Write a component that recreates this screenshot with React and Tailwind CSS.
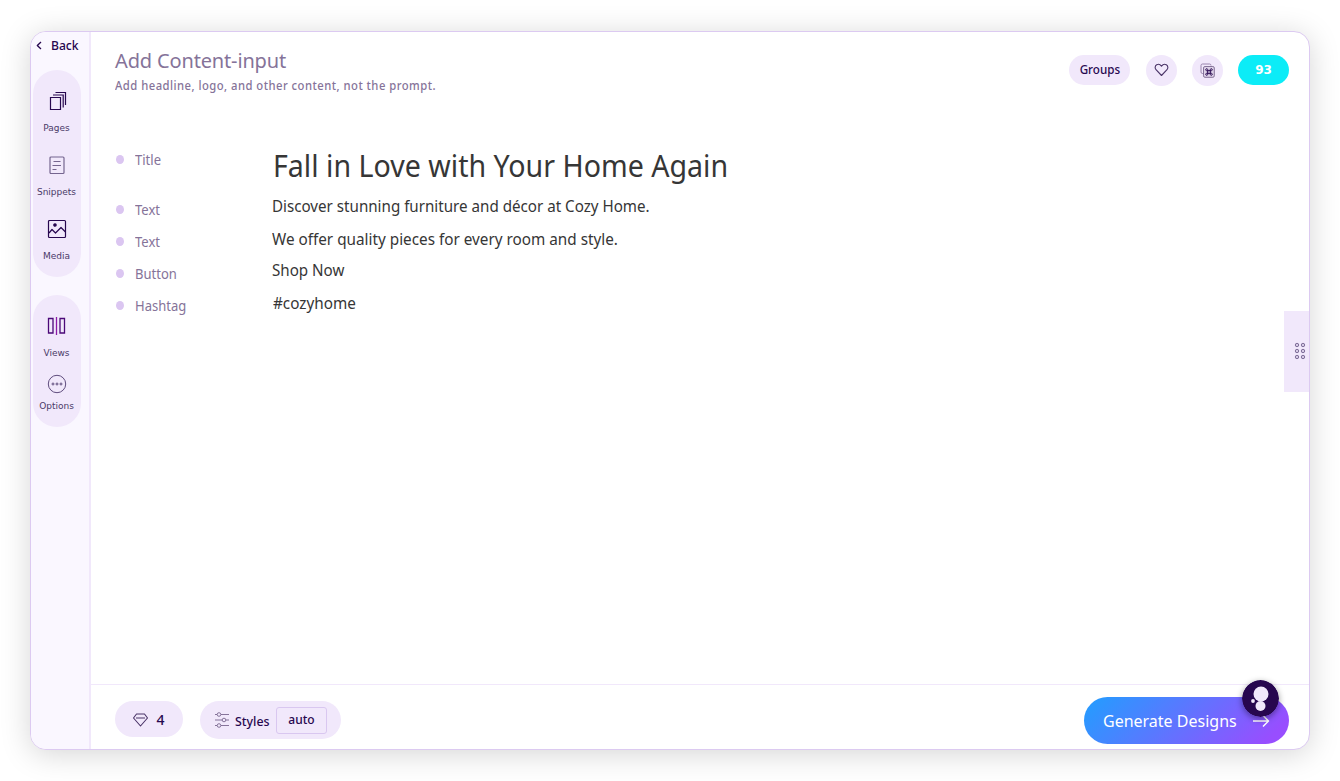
import React from "react";

const stroke = { fill: "none", stroke: "currentColor", strokeLinejoin: "round" };

function PagesIcon() {
  return (
    <svg width="18" height="20" viewBox="0 0 18 20" {...stroke} strokeLinejoin="miter" strokeWidth="1.2">
      <path d="M1.500 6.500h10v12h-10zM4 4h10.200v12.500M6.500 1.500h10v12.500" />
    </svg>
  );
}

function SnippetsIcon() {
  return (
    <svg width="16" height="19" viewBox="0 0 16 19" {...stroke} strokeWidth="1.200">
      <rect x="1" y="1" width="14" height="16.500" rx="1" />
      <path d="M4.500 5.500h7M3.500 9.500h8.500M3.500 13.500h4" />
    </svg>
  );
}

function MediaIcon() {
  return (
    <svg width="20" height="20" viewBox="0 0 20 20" {...stroke} strokeWidth="1.2">
      <rect x="1.500" y="1.500" width="17" height="17" rx="1" />
      <path d="M2 14l3-3.500 3.500 3.500 5.500-5.500 4.500 4.500" />
      <circle cx="8" cy="6" r="1.200" fill="currentColor" />
    </svg>
  );
}

function ViewsIcon() {
  return (
    <svg width="20" height="20" viewBox="0 0 20 20" {...stroke} strokeLinejoin="miter" strokeWidth="1.300">
      <path d="M1.500 2.500h4.500v14.500h-4.500zM13 2.500h4.500v14.500h-4.500z" />
      <path d="M9.500 1v18" stroke="#8d1aa8" />
    </svg>
  );
}

function OptionsIcon() {
  return (
    <svg width="20" height="20" viewBox="0 0 20 20" {...stroke} strokeWidth="1">
      <circle cx="10" cy="10" r="8.700" />
      <circle cx="6" cy="10" r="1" />
      <circle cx="10" cy="10" r="1" />
      <circle cx="14" cy="10" r="1" />
    </svg>
  );
}

function NavItem({ icon, label, className, tone }) {
  return (
    <div className={`flex flex-col items-center ${className}`}>
      <span className={`flex h-5 items-center ${tone}`}>{icon}</span>
      <span className="mt-[10px] text-[9px] leading-[14px] text-[#4a3a68]">{label}</span>
    </div>
  );
}

function Sidebar() {
  return (
    <aside className="flex w-[60px] shrink-0 flex-col border-r-2 border-[#f1e8fb] bg-[#faf7ff] font-['DejaVu_Sans',sans-serif]">
      <div className="flex h-[38px] items-start pt-[5px] pl-[5px] font-['Noto_Sans',sans-serif] text-[#27074f]">
        <svg className="mt-[4px]" width="6" height="9" viewBox="0 0 6 9" {...stroke} strokeWidth="1.300">
          <path d="M5 1L1.300 4.500L5 8" />
        </svg>
        <span className="ml-[9px] origin-left scale-x-[0.970] text-[12.500px] leading-[17px] font-medium">Back</span>
      </div>
      <div className="ml-[1.500px] flex h-[207px] w-[48px] flex-col rounded-[24px] bg-[#f1e8fb] pt-[21px]">
        <NavItem icon={<PagesIcon />} label="Pages" className="h-[64px]" tone="pl-[2px] text-[#27074f]" />
        <NavItem icon={<SnippetsIcon />} label="Snippets" className="h-[64px]" tone="text-[#75658f]" />
        <NavItem icon={<MediaIcon />} label="Media" className="" tone="text-[#27074f]" />
      </div>
      <div className="mt-[18px] ml-[1.500px] flex h-[132px] w-[48px] flex-col rounded-[24px] bg-[#f1e8fb] pt-[21px]">
        <NavItem icon={<ViewsIcon />} label="Views" className="h-[58px]" tone="text-[#4b0878]" />
        <div className="flex flex-col items-center text-[#5f4c7d]">
          <OptionsIcon />
          <span className="mt-[5px] text-[9px] leading-[14px] text-[#4a3a68]">Options</span>
        </div>
      </div>
    </aside>
  );
}

function Header() {
  return (
    <header className="flex justify-between pr-[20px] pl-[24px]">
      <div className="pt-[15px] text-[#857399]">
        <h1 className="text-[20px] leading-[28px] tracking-[-0.150px]">Add Content-input</h1>
        <p className="origin-left scale-x-[0.939] text-[12px] leading-[22px] font-medium tracking-[0.500px] whitespace-nowrap">
          Add headline, logo, and other content, not the prompt.
        </p>
      </div>
      <div className="flex items-center pt-[11px] text-[#27074f]">
        <button className="h-[30px] w-[61px] rounded-full bg-[#f1e8fb] text-[12px] font-medium">
          <span className="inline-block scale-x-[0.970]">Groups</span>
        </button>
        <button className="ml-[16px] flex size-[31px] items-center justify-center rounded-full bg-[#f1e8fb] text-[#4b3568]">
          <svg width="15" height="14" viewBox="0 0 15 14" {...stroke} strokeWidth="1.100">
            <path d="M7.500 12.500L2 6.700C.6 5.200 1 2.800 2.700 1.800 4.400.8 6.300 1.500 7.500 3.200 8.700 1.500 10.600.8 12.300 1.800 14 2.800 14.400 5.200 13 6.700z" />
          </svg>
        </button>
        <button className="ml-[15px] flex size-[31px] items-center justify-center rounded-full bg-[#f1e8fb]">
          <svg width="15" height="15" viewBox="0 0 15 15" {...stroke} strokeWidth="0.900">
            <path d="M3.500 10.500H2.500a1.500 1.500 0 0 1-1.500-1.500V2.500A1.500 1.500 0 0 1 2.500 1h7A1.500 1.500 0 0 1 11 2.500" stroke="#917ca5" />
            <rect x="3.500" y="3.500" width="10.800" height="10.800" rx="1.500" fill="#ddd1e8" stroke="#79678f" />
            <path d="M7.700 7.700h2.600v2.600h-2.600zM7.700 7.700H6.500a1 1 0 1 1 1.200-1.200zM10.300 7.700h1.200a1 1 0 1 0-1.200-1.200zM7.700 10.300H6.500a1 1 0 1 0 1.200 1.200zM10.300 10.300h1.200a1 1 0 1 1-1.200 1.200z" strokeWidth="1" />
          </svg>
        </button>
        <button className="ml-[15px] h-[30px] w-[51px] rounded-full bg-[#0cecf7] font-['DejaVu_Sans',sans-serif] text-[12px] font-bold text-white">93</button>
      </div>
    </header>
  );
}

function Row({ label, text, height, textClass }) {
  return (
    <div className={`flex ${height}`}>
      <span className="mt-[10px] h-[9px] w-[8px] shrink-0 rounded-[50%] bg-[#dbc6f1]" />
      <span className="mt-[5px] ml-[11px] w-[137px] shrink-0 text-[14px] leading-[20px] text-[#857399]">
        <span className="inline-block origin-left scale-x-[0.930]">{label}</span>
      </span>
      <span className={`origin-left whitespace-nowrap text-[#363636] ${textClass}`}>{text}</span>
    </div>
  );
}

const body = "h-[20px] text-[16px] leading-[20px]";

function Content() {
  return (
    <main className="flex flex-1 pt-[48px] pl-[25px]">
      <div className="flex flex-1 flex-col">
        <Row label="Title" text="Fall in Love with Your Home Again" height="h-[50px]" textClass="-mt-px ml-px h-[42px] scale-x-[0.922] text-[31px] leading-[42px]" />
        <Row label="Text" text="Discover stunning furniture and décor at Cozy Home." height="h-[32px]" textClass={`${body} mt-px scale-x-[0.947]`} />
        <Row label="Text" text="We offer quality pieces for every room and style." height="h-[32px]" textClass={`${body} mt-[2px] scale-x-[0.955]`} />
        <Row label="Button" text="Shop Now" height="h-[32px]" textClass={`${body} mt-px scale-x-[0.947]`} />
        <Row label="Hashtag" text="#cozyhome" height="h-[32px]" textClass={`${body} mt-[2px] ml-px scale-x-[0.955]`} />
      </div>
      <div className="mt-[166px] flex h-[81px] w-[25px] items-center justify-center bg-[#f1e8fb] pb-px pl-[6px]">
        <svg width="12" height="18" viewBox="0 0 12 18" fill="#d5c9e5" stroke="#80709a" strokeWidth="1">
          {[3, 9].map((x) => [3, 9, 15].map((y) => <circle key={`${x}-${y}`} cx={x} cy={y} r="1.700" />))}
        </svg>
      </div>
    </main>
  );
}

function Footer() {
  return (
    <footer className="flex h-[65px] justify-between border-t border-[#f1e8fb] pr-[20px] pl-[24px] text-[#27074f]">
      <div className="flex items-start">
        <div className="mt-[16px] flex h-[36px] w-[68px] items-center justify-center gap-[8px] rounded-full bg-[#f1e8fb] pt-px">
          <svg width="15" height="14" viewBox="0 0 15 14" {...stroke} strokeWidth="1.100" className="text-[#4b3568]">
            <path d="M3.500 1h8l3 4L7.500 13L.5 5zM3 5h9" />
          </svg>
          <span className="text-[14px] font-medium leading-[18px]">4</span>
        </div>
        <div className="mt-[16px] ml-[17px] flex h-[38px] w-[141px] items-center rounded-full bg-[#f1e8fb] pl-[14px]">
          <svg width="16" height="16" viewBox="0 0 16 16" {...stroke} strokeWidth="0.900" className="text-[#79678f]">
            <path d="M1 2.500h2M7 2.500h8M1 8h7M12 8h3M1 13.500h2M7 13.500h8" />
            <circle cx="5" cy="2.500" r="1.800" />
            <circle cx="10" cy="8" r="1.800" />
            <circle cx="5" cy="13.500" r="1.800" />
          </svg>
          <span className="mt-[2px] ml-[5px] w-[41px] origin-left scale-x-[0.950] text-[13px] font-medium leading-[18px]">Styles</span>
          <button className="flex h-[27px] w-[51px] items-center justify-center rounded-[3px] border border-[#d9c7f0] text-[12px] font-medium">auto</button>
        </div>
      </div>
      <div className="relative mt-[12px] h-[47px] w-[205px]">
        <button className="flex size-full items-center rounded-full bg-[linear-gradient(135deg,#2a98ff_7%,#984eff_90%)] pl-[19px] text-[16px] text-white">
          <span className="w-[149px] text-left whitespace-nowrap">Generate Designs</span>
          <svg width="18" height="14" viewBox="0 0 18 14" {...stroke} strokeWidth="1.500">
            <path d="M1 7h15.500M11 1.500L16.500 7L11 12.500" />
          </svg>
        </button>
        <svg className="absolute -top-[17.500px] left-[158px] rounded-full shadow-[0_2px_6px_rgba(0,0,0,0.4)]" width="37" height="37" viewBox="0 0 37 37">
          <circle cx="18.500" cy="18.500" r="18.500" fill="#27074f" />
          <circle cx="19" cy="14" r="7.500" fill="#f1e8fb" />
          <circle cx="18.500" cy="26" r="5" fill="#f1e8fb" />
          <circle cx="11" cy="21" r="1.900" fill="#f1e8fb" />
        </svg>
      </div>
    </footer>
  );
}

export default function App() {
  return (
    <div className="h-[781px] w-[1340px] bg-white px-[30px] pt-[31px] font-['Noto_Sans',sans-serif]">
      <div className="flex h-[719px] w-[1280px] overflow-hidden rounded-[16px] border border-[#dccaf1] bg-white shadow-[0_4px_30px_rgba(0,0,0,0.17)]">
        <Sidebar />
        <div className="flex min-w-0 flex-1 flex-col">
          <Header />
          <Content />
          <Footer />
        </div>
      </div>
    </div>
  );
}
